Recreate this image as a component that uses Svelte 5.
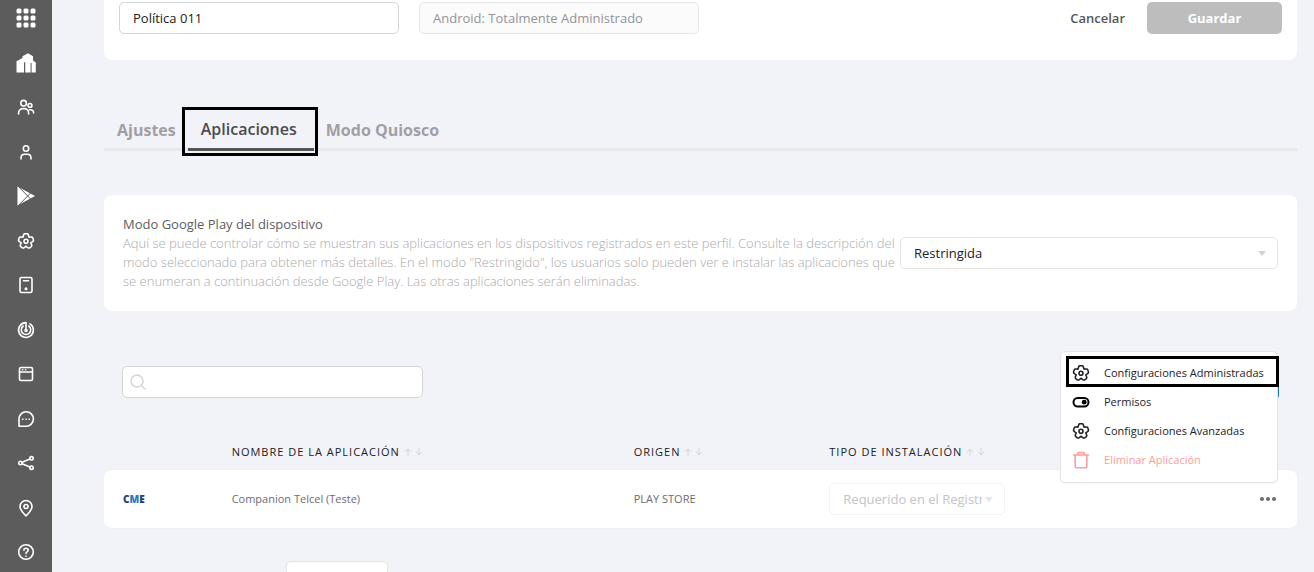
<script>
  let policyName = $state('Política 011');
  let search = $state('');

  const tabs = [
    { label: 'Ajustes', active: false },
    { label: 'Aplicaciones', active: true },
    { label: 'Modo Quiosco', active: false }
  ];

  const nav = [
    { id: 'grid', label: 'Menú' },
    { id: 'home', label: 'Inicio' },
    { id: 'users', label: 'Grupos' },
    { id: 'user', label: 'Usuarios' },
    { id: 'play', label: 'Google Play' },
    { id: 'gear', label: 'Ajustes' },
    { id: 'device', label: 'Dispositivos' },
    { id: 'radar', label: 'Rastreo' },
    { id: 'window', label: 'Aplicaciones' },
    { id: 'chat', label: 'Mensajes' },
    { id: 'share', label: 'Compartir' },
    { id: 'pin', label: 'Ubicación' },
    { id: 'help', label: 'Ayuda' }
  ];

  const menu = [
    { icon: 'gear', label: 'Configuraciones Administradas', marked: true },
    { icon: 'toggle', label: 'Permisos' },
    { icon: 'gear', label: 'Configuraciones Avanzadas' },
    { icon: 'trash', label: 'Eliminar Aplicación', danger: true }
  ];

  const columns = ['Nombre de la aplicación', 'Origen', 'Tipo de instalación'];

  // Outline of the five-lobed gear
  const gearPath =
    Array.from({ length: 60 }, (_, i) => {
      const a = (i / 60) * Math.PI * 2;
      const r = 6.7 + 1.2 * Math.cos(5 * a) - 0.4 * Math.cos(10 * a);
      return `${i ? 'L' : 'M'}${(10 + r * Math.sin(a)).toFixed(2)} ${(10.2 - r * Math.cos(a)).toFixed(2)}`;
    }).join('') + 'Z';
</script>

{#snippet icon(id)}
  <svg class="icon" class:solid={id === 'toggle'} viewBox="0 0 20 20" width="20" height="20" aria-hidden="true">
    {#if id === 'grid'}
      <g fill="currentColor" stroke="none">
        {#each [0.5, 7.5, 14.5] as y}
          {#each [0.5, 7.5, 14.5] as x}
            <rect {x} {y} width="5" height="5" rx="1.5" />
          {/each}
        {/each}
      </g>
    {:else if id === 'home'}
      <path fill="currentColor" stroke="none" d="M0.5 19.5V8.2L6.5 5V3.2L12 0.3 17 3.2V7.5L19.8 9.5V19.5H15.6V10H14.6V19.5H9.2V9.2H8V19.5Z" />
    {:else if id === 'users'}
      <circle cx="7.6" cy="6.2" r="2.8" />
      <circle cx="14" cy="8.4" r="1.9" />
      <path d="M2.6 17v-1.2a4.4 4.4 0 0 1 4.4-4.2h1.2a4.4 4.4 0 0 1 4.4 4.2V17M13.500 12.800c2.500-.4 4.100 1 4.100 3.200" />
    {:else if id === 'user'}
      <circle cx="10" cy="6.500" r="2.700" />
      <path d="M5 17v-1.300a3.600 3.600 0 0 1 3.600-3.500h2.800a3.600 3.600 0 0 1 3.600 3.500V17" />
    {:else if id === 'play'}
      <path fill="currentColor" stroke="none" d="M1.500 0.500L19 10 1.500 19.500Z" />
      <path class="cut" d="M2 0L14.500 13M2 20L14.500 7" />
    {:else if id === 'gear'}
      <path d={gearPath} />
      <circle cx="10" cy="10.300" r="2" />
    {:else if id === 'device'}
      <rect x="4" y="2.500" width="12" height="15" rx="1.500" />
      <path d="M7.500 5.800h5" />
      <circle cx="10" cy="13.800" r="0.700" fill="currentColor" />
    {:else if id === 'radar'}
      <path d="M10 2.600a7.400 7.400 0 1 0 4 1.200M10 2.600V10M7.200 6a4.700 4.700 0 1 0 5.600 0" />
      <circle cx="10" cy="10.500" r="1" fill="currentColor" />
    {:else if id === 'window'}
      <rect x="3.500" y="3.500" width="13" height="13" rx="1.500" />
      <path d="M3.500 8h13M6.500 5.800h.2M9.500 5.800h.2" />
    {:else if id === 'chat'}
      <path d="M3 17.200V10a7.200 7.200 0 1 1 7.200 7.200Z" />
      <path d="M6.700 10.200h.2M9.900 10.200h.2M13.100 10.200h.2" />
    {:else if id === 'share'}
      <circle cx="4.500" cy="10" r="1.700" />
      <circle cx="15.500" cy="5.300" r="1.700" />
      <circle cx="15.500" cy="14.700" r="1.700" />
      <path d="M6 9.300L14 6M6 10.700l8 3.300" />
    {:else if id === 'pin'}
      <path d="M10 17.800C6.500 14.500 4 11.700 4 8.500a6 6 0 0 1 12 0c0 3.200-2.500 6-6 9.300Z" />
      <circle cx="10" cy="8.500" r="2" />
    {:else if id === 'help'}
      <circle cx="10" cy="10" r="7.300" />
      <path d="M7.900 8.300c0-2.800 4.300-2.700 4.300-.1 0 1.800-2.200 1.700-2.200 3.300M10 14.100v.2" />
    {:else if id === 'toggle'}
      <rect x="2.500" y="6" width="15" height="8.500" rx="4.200" />
      <circle cx="13.200" cy="10.200" r="2.400" fill="currentColor" stroke="none" />
    {:else if id === 'trash'}
      <path d="M2.500 5h15M7 5V2.500h6V5M4.200 5v11.500a1.200 1.200 0 0 0 1.200 1.200h9.200a1.200 1.200 0 0 0 1.200-1.200V5" />
    {/if}
  </svg>
{/snippet}

<div class="shell">
  <nav class="sidebar">
    {#each nav as item}
      <a href="#{item.id}" aria-label={item.label}>{@render icon(item.id)}</a>
    {/each}
  </nav>

  <main>
    <header class="card header">
      <input class="field" type="text" aria-label="Nombre de la política" bind:value={policyName} />
      <input class="field" type="text" aria-label="Tipo" value="Android: Totalmente Administrado" disabled />
      <div class="actions">
        <button class="cancel" type="button">Cancelar</button>
        <button class="save" type="button">Guardar</button>
      </div>
    </header>

    <div class="tabs" role="tablist">
      {#each tabs as tab}
        <button class="tab" class:active={tab.active} type="button" role="tab" aria-selected={tab.active}>
          {tab.label}
        </button>
      {/each}
    </div>

    <section class="card mode">
      <div class="copy">
        <label for="play-mode">Modo Google Play del dispositivo</label>
        <p>
          Aquí se puede controlar cómo se muestran sus aplicaciones en los dispositivos registrados en este perfil.
          Consulte la descripción del modo seleccionado para obtener más detalles. En el modo "Restringido", los
          usuarios solo pueden ver e instalar las aplicaciones que se enumeran a continuación desde Google Play. Las
          otras aplicaciones serán eliminadas.
        </p>
      </div>
      <div class="select">
        <select id="play-mode" class="field"><option>Restringida</option></select>
      </div>
    </section>

    <div class="toolbar">
      <div class="search">
        <svg viewBox="0 0 16 16" width="16" height="16" aria-hidden="true">
          <circle cx="7" cy="7" r="6" />
          <path d="M11.500 11.500L15 15" />
        </svg>
        <input class="field" type="search" aria-label="Buscar" bind:value={search} />
      </div>
      <button class="add" type="button" aria-label="Añadir"></button>
    </div>

    <table>
      <colgroup>
        <col class="c-logo" /><col class="c-name" /><col class="c-origin" /><col /><col class="c-more" />
      </colgroup>
      <thead>
        <tr>
          <th></th>
          {#each columns as column}
            <th scope="col">
              <span class="sort">
                {column}
                <svg viewBox="0 0 20 8" width="20" height="8" aria-hidden="true">
                  <path d="M4 8V1M1 4l3-3 3 3M15 0v7M12 4l3 3 3-3" />
                </svg>
              </span>
            </th>
          {/each}
          <th></th>
        </tr>
      </thead>
      <tbody>
        <tr>
          <td><span class="logo">C<b>M</b>E</span></td>
          <td>Companion Telcel (Teste)</td>
          <td>PLAY STORE</td>
          <td>
            <div class="select install">
              <select class="field" aria-label="Tipo de instalación" disabled>
                <option>Requerido en el Registro</option>
              </select>
            </div>
          </td>
          <td>
            <div class="more">
              <button type="button" aria-label="Más opciones"><i></i><i></i><i></i></button>
              <div class="menu" role="menu">
                {#each menu as item}
                  <button class:danger={item.danger} class:marked={item.marked} type="button" role="menuitem">
                    {@render icon(item.icon)}
                    {item.label}
                  </button>
                {/each}
              </div>
            </div>
          </td>
        </tr>
      </tbody>
    </table>

    <footer>
      <label for="page-size">Artículos por página</label>
      <div class="select">
        <select id="page-size" class="field"><option>10</option></select>
      </div>
    </footer>
  </main>
</div>

<style>
  :global(body) {
    margin: 0;
    background: #f2f3f8;
  }

  .shell {
    display: flex;
    height: 100vh;
    overflow: hidden;
    font: 400 13px/19px 'Open Sans', sans-serif;
    color: #212121;
    background: #f2f3f8;
  }

  .shell :is(*, *::before, *::after) {
    box-sizing: border-box;
  }

  button,
  input,
  select {
    margin: 0;
    font: inherit;
    color: inherit;
  }

  button {
    padding: 0;
    border: 0;
    background: none;
    cursor: pointer;
  }

  .icon {
    display: block;
    flex: none;
    fill: none;
    stroke: currentColor;
    stroke-width: 1.6;
    stroke-linecap: round;
    stroke-linejoin: round;
  }

  .icon.solid {
    color: #000;
    stroke-width: 2;
  }

  .icon .cut {
    stroke: #5c5c5c;
    stroke-width: 1;
  }

  .sidebar {
    flex: none;
    display: flex;
    flex-direction: column;
    align-items: center;
    justify-content: space-between;
    width: 52px;
    padding: 8px 1px 10px 0;
    background: #5c5c5c;
    color: #fff;
  }

  .sidebar a {
    color: inherit;
  }

  main {
    flex: 1;
    min-width: 0;
    padding: 0 17px 0 52px;
  }

  .card {
    background: #fff;
    border-radius: 8px;
  }

  .field {
    display: block;
    width: 100%;
    height: 32px;
    padding: 0 13px;
    border: 1px solid #d5d5d9;
    border-radius: 5px;
    background: #fff;
    outline: none;
    appearance: none;
  }

  .header {
    display: flex;
    gap: 20px;
    padding: 2px 15px 26px;
    border-radius: 0 0 8px 8px;
  }

  .header .field {
    flex: 0 1 280px;
    min-width: 0;
  }

  .header .field:disabled {
    border-color: #e6e6e8;
    background: #fbfbfb;
    color: #949498;
  }

  .actions {
    display: flex;
    gap: 22px;
    margin-left: auto;
    font-weight: 600;
  }

  .cancel {
    color: #55565a;
  }

  .save {
    width: 135px;
    border-radius: 5px;
    background: #bdbdbd;
    color: #fff;
    font-weight: 700;
  }

  .tabs {
    display: flex;
    align-items: flex-end;
    gap: 12px;
    margin-top: 50px;
    padding-left: 13px;
    border-bottom: 3px solid #e6e7ea;
    font: 700 16px/36px 'Open Sans', sans-serif;
    color: #a0a0a4;
  }

  .tab.active {
    position: relative;
    margin-bottom: -3px;
    padding: 0 17px 0 13px;
    border-bottom: 3px solid #555;
    color: #4b4b4f;
    font-weight: 600;
    line-height: 38px;
  }

  .tab.active::after {
    content: '';
    position: absolute;
    inset: -3px -4px -8px -6px;
    border: 3px solid #000;
  }

  .mode {
    display: flex;
    align-items: center;
    margin-top: 44px;
    padding: 20px 19px;
  }

  .copy {
    flex: 1;
    color: #aaa;
    font-weight: 300;
  }

  .copy label {
    color: #5c5d66;
    font-weight: 400;
  }

  .copy p {
    margin: 0;
  }

  .select {
    position: relative;
  }

  .mode .select {
    flex: 0 1 378px;
  }

  .select .field {
    border-color: #e4e4e8;
  }

  .select::after {
    content: '';
    position: absolute;
    top: 14px;
    right: 12px;
    border: 4px solid transparent;
    border-top: 5px solid #d2d2d6;
    border-bottom: 0;
  }

  .toolbar {
    display: flex;
    justify-content: space-between;
    margin-top: 55px;
    padding: 0 18px;
  }

  .search {
    position: relative;
    flex: 0 1 301px;
  }

  .search svg {
    position: absolute;
    top: 8px;
    left: 8px;
    fill: none;
    stroke: #d5d5d8;
    stroke-width: 1.5;
    stroke-linecap: round;
  }

  .search .field {
    padding-left: 32px;
  }

  .add {
    width: 135px;
    height: 34px;
    border-radius: 5px;
    background: #1878b4;
  }

  table {
    width: 100%;
    margin-top: 35px;
    border-spacing: 0;
    table-layout: fixed;
    font-size: 11px;
    line-height: 16px;
  }

  .c-logo {
    width: 10.7%;
  }

  .c-name {
    width: 33.7%;
  }

  .c-origin {
    width: 16.4%;
  }

  .c-more {
    width: 55px;
  }

  th {
    height: 34px;
    padding: 0;
    font-weight: 400;
    letter-spacing: 1px;
    text-align: left;
    text-transform: uppercase;
  }

  .sort {
    display: flex;
    align-items: center;
    gap: 4px;
  }

  .sort svg {
    fill: none;
    stroke: #d5d5d9;
    stroke-width: 1;
  }

  td {
    height: 60px;
    padding: 0;
    border: solid #ebf0f3;
    border-width: 1px 0;
    background: #fff;
    color: #6c6c75;
  }

  td:first-child {
    padding-left: 19px;
    border-radius: 8px 0 0 8px;
  }

  td:last-child {
    border-radius: 0 8px 8px 0;
  }

  .logo {
    color: #263f78;
    font-size: 10px;
    font-weight: 800;
  }

  .logo b {
    color: #2878bd;
    font-weight: 800;
  }

  .install {
    width: 176px;
    font-size: 13px;
  }

  .install .field:disabled {
    padding-right: 22px;
    border-color: #f3f3f5;
    color: #c4c4c8;
    opacity: 1;
  }

  .install::after {
    border-top-color: #e6e6ea;
  }

  .more {
    position: relative;
    width: 36px;
    height: 32px;
  }

  .more > button {
    display: flex;
    align-items: center;
    justify-content: center;
    gap: 2px;
    width: 52px;
    height: 32px;
  }

  .more i {
    width: 4px;
    height: 4px;
    border-radius: 50%;
    background: #6c6c74;
  }

  .menu {
    position: absolute;
    right: 0;
    bottom: 32px;
    display: flex;
    flex-direction: column;
    width: 218px;
    padding: 6px 0 8px 6px;
    border: 1px solid #e4e5e9;
    border-radius: 5px;
    background: #fff;
    box-shadow: 0 1px 2px #0000000a;
  }

  .menu button {
    position: relative;
    display: flex;
    align-items: center;
    gap: 13px;
    height: 29px;
    padding-left: 4px;
    font-size: 11px;
    color: #222228;
    white-space: nowrap;
  }

  .menu .danger {
    color: #ff9c9c;
  }

  .menu .marked::after {
    content: '';
    position: absolute;
    inset: -2px -2px 0 -1px;
    border: 3px solid #000;
  }

  footer {
    display: flex;
    align-items: center;
    margin-top: 32px;
    padding-left: 19px;
    color: #7c7fa0;
  }

  footer label {
    width: 163px;
  }

  footer .select {
    flex: 0 0 102px;
  }
</style>
